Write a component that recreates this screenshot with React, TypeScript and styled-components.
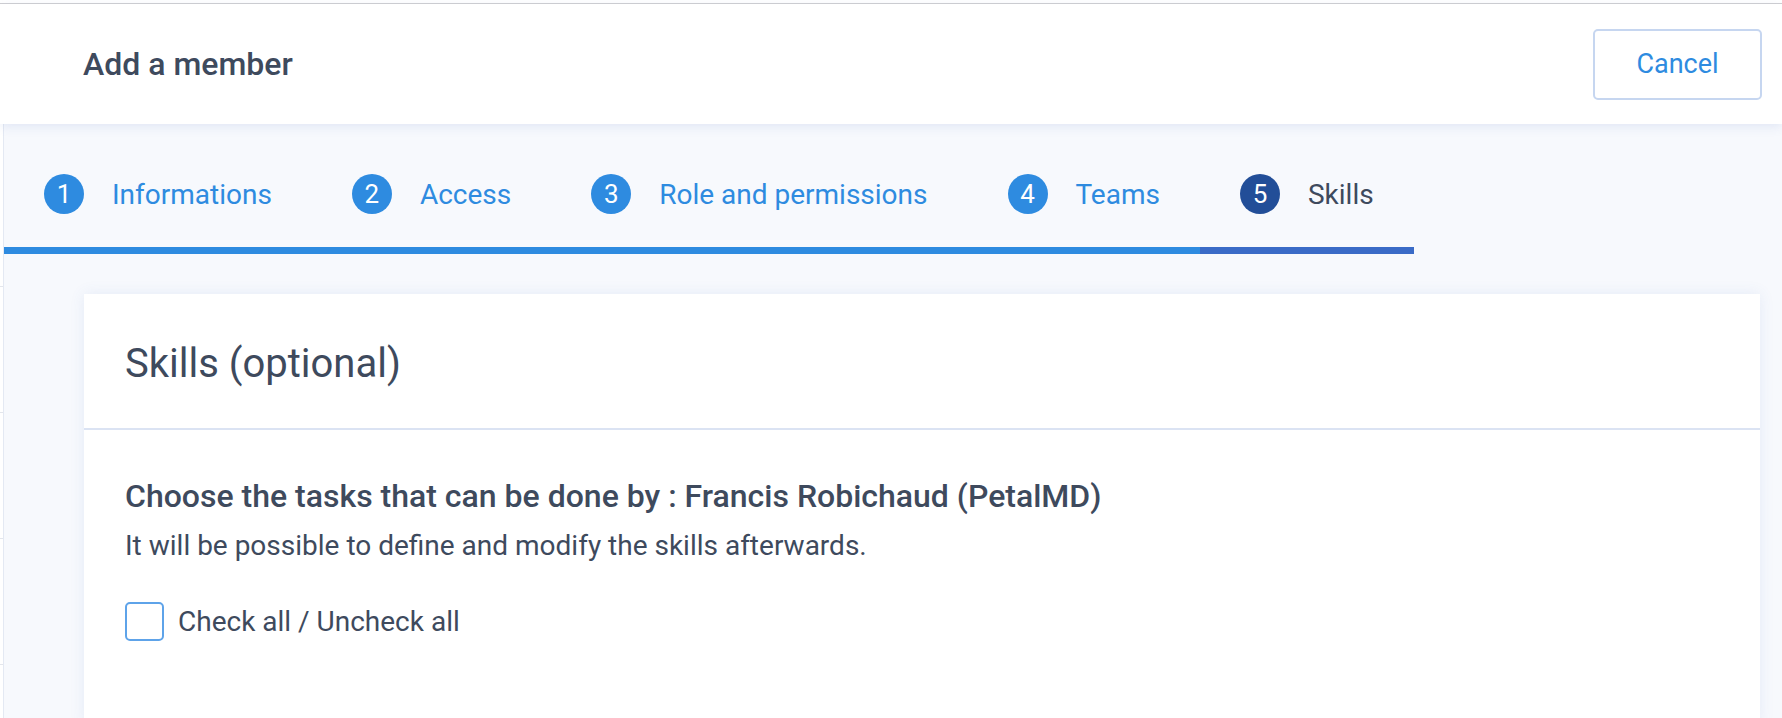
import React from "react";
import styled, { createGlobalStyle } from "styled-components";

const GlobalStyle = createGlobalStyle`
  html, body {
    margin: 0;
    padding: 0;
    background: #ffffff;
    font-family: Roboto, "Noto Sans", "Liberation Sans", sans-serif;
    overflow: hidden;
  }
  * { box-sizing: border-box; }
`;

const TopEdge = styled.div`
  height: 4px;
  background: #ffffff;
  border-bottom: 1px solid #cfcfd2;
`;

const Header = styled.header`
  position: relative;
  z-index: 2;
  height: 120px;
  background: #ffffff;
  display: flex;
  align-items: center;
  justify-content: space-between;
  padding: 0 20px 0 83px;
  box-shadow: 0 3px 10px rgba(70, 110, 190, 0.12);
`;

const Title = styled.h1`
  margin: 0;
  font-size: 32px;
  font-weight: 500;
  color: #3e4a5d;
`;

const CancelButton = styled.button`
  width: 169px;
  height: 71px;
  border: 2px solid #c6d6f0;
  border-radius: 5px;
  background: #ffffff;
  color: #2e8be0;
  font-family: inherit;
  font-size: 27px;
  font-weight: 400;
  cursor: pointer;
`;

const Body = styled.div`
  display: flex;
  height: 600px;
`;

const Sidebar = styled.aside`
  width: 4px;
  flex: none;
  background: #ffffff;
  border-right: 1px solid #e4e9f3;
  display: flex;
  flex-direction: column;
  padding-top: 162px;
  gap: 125px;
`;

const SidebarRule = styled.div`
  height: 1px;
  background: #e3e6ec;
`;

const Content = styled.main`
  flex: 1;
  background: #f7f9fd;
  display: flex;
  flex-direction: column;
`;

const Stepper = styled.nav`
  display: flex;
  padding-top: 50px;
`;

const Step = styled.div<{ $active?: boolean }>`
  display: flex;
  align-items: center;
  gap: 28px;
  padding: 0 40px 33px;
  border-bottom: 7px solid ${(p) => (p.$active ? "#3a6bc7" : "#2e8be0")};
`;

const StepNumber = styled.span<{ $active?: boolean }>`
  width: 40px;
  height: 40px;
  border-radius: 50%;
  background: ${(p) => (p.$active ? "#224e98" : "#2e8be0")};
  color: #ffffff;
  display: flex;
  align-items: center;
  justify-content: center;
  font-size: 26px;
  font-weight: 400;
`;

const StepLabel = styled.span<{ $active?: boolean }>`
  font-size: 28px;
  color: ${(p) => (p.$active ? "#3e4a5d" : "#2e8be0")};
`;

const Card = styled.section`
  margin: 40px 22px 0 80px;
  background: #ffffff;
  flex: 1;
  box-shadow: 0 0 14px rgba(70, 110, 190, 0.1);
`;

const CardHeader = styled.div`
  height: 136px;
  display: flex;
  align-items: center;
  padding: 4px 0 0 41px;
  border-bottom: 2px solid #dbe3f3;
`;

const CardTitle = styled.h2`
  margin: 0;
  font-size: 40px;
  font-weight: 400;
  color: #3e4a5d;
`;

const CardBody = styled.div`
  padding: 48px 41px 0;
  display: flex;
  flex-direction: column;
`;

const Question = styled.h3`
  margin: 0;
  font-size: 32px;
  font-weight: 500;
  color: #3e4a5d;
  line-height: 36px;
`;

const Hint = styled.p`
  margin: 15px 0 0;
  font-size: 28px;
  color: #3e4a5d;
  line-height: 34px;
`;

const CheckRow = styled.label`
  margin-top: 39px;
  display: flex;
  align-items: center;
  gap: 14px;
  cursor: pointer;
`;

const CheckBox = styled.span`
  width: 39px;
  height: 39px;
  border: 2px solid #5ea3e9;
  border-radius: 5px;
  background: #ffffff;
`;

const CheckLabel = styled.span`
  font-size: 28px;
  color: #3e4a5d;
`;

const steps = [
  { n: 1, label: "Informations" },
  { n: 2, label: "Access" },
  { n: 3, label: "Role and permissions" },
  { n: 4, label: "Teams" },
  { n: 5, label: "Skills", active: true },
];

export default function App() {
  return (
    <>
      <GlobalStyle />
      <TopEdge />
      <Header>
        <Title>Add a member</Title>
        <CancelButton>Cancel</CancelButton>
      </Header>
      <Body>
        <Sidebar>
          <SidebarRule />
          <SidebarRule />
          <SidebarRule />
          <SidebarRule />
        </Sidebar>
        <Content>
          <Stepper>
            {steps.map((s) => (
              <Step key={s.n} $active={s.active}>
                <StepNumber $active={s.active}>{s.n}</StepNumber>
                <StepLabel $active={s.active}>{s.label}</StepLabel>
              </Step>
            ))}
          </Stepper>
          <Card>
            <CardHeader>
              <CardTitle>Skills (optional)</CardTitle>
            </CardHeader>
            <CardBody>
              <Question>Choose the tasks that can be done by : Francis Robichaud (PetalMD)</Question>
              <Hint>It will be possible to define and modify the skills afterwards.</Hint>
              <CheckRow>
                <CheckBox />
                <CheckLabel>Check all / Uncheck all</CheckLabel>
              </CheckRow>
            </CardBody>
          </Card>
        </Content>
      </Body>
    </>
  );
}
